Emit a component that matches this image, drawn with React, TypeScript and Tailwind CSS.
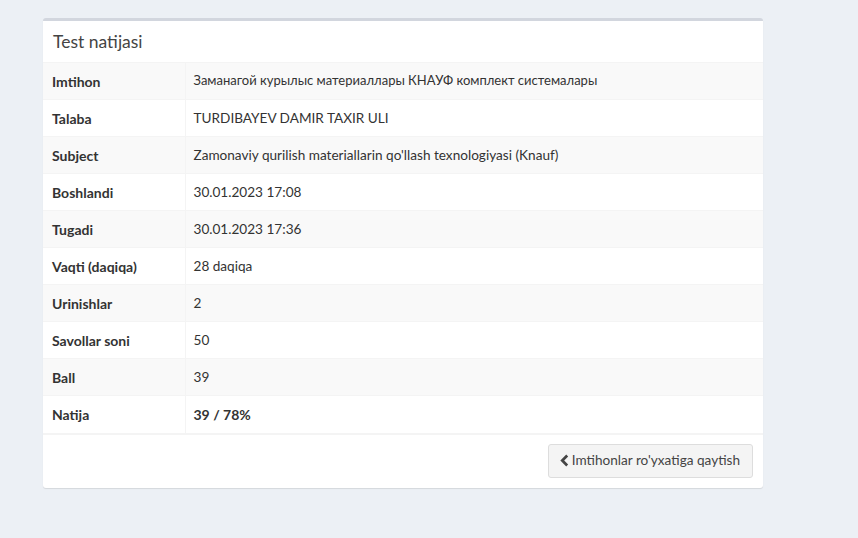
import React from 'react';

const rows: { label: string; value: string; bold?: boolean; cyr?: boolean }[] = [
  { label: 'Imtihon', value: 'Заманагой курылыс материаллары КНАУФ комплект системалары', cyr: true },
  { label: 'Talaba', value: 'TURDIBAYEV DAMIR TAXIR ULI' },
  { label: 'Subject', value: "Zamonaviy qurilish materiallarin qo'llash texnologiyasi (Knauf)" },
  { label: 'Boshlandi', value: '30.01.2023 17:08' },
  { label: 'Tugadi', value: '30.01.2023 17:36' },
  { label: 'Vaqti (daqiqa)', value: '28 daqiqa' },
  { label: 'Urinishlar', value: '2' },
  { label: 'Savollar soni', value: '50' },
  { label: 'Ball', value: '39' },
  { label: 'Natija', value: '39 / 78%', bold: true },
];

export default function App() {
  return (
    <div
      className="min-h-[538px] w-full bg-[#ecf0f5] pt-[18px] pl-[43px] text-[13.6px] text-[#333]"
      style={{ fontFamily: 'Lato, "Noto Sans", sans-serif' }}
    >
      {/* Box */}
      <div className="w-[720px] rounded-[3px] border-t-[3px] border-[#d2d6de] bg-white shadow-[0_1px_1px_rgba(0,0,0,0.1)]">
        {/* Header */}
        <div className="flex h-[41px] items-center px-[10px]">
          <h3 className="text-[17.5px] leading-none text-[#444]">Test natijasi</h3>
        </div>

        {/* Table */}
        <table className="w-full border-collapse">
          <tbody>
            {rows.map((r, i) => (
              <tr
                key={r.label}
                className={`h-[37px] border-t border-[#f4f4f4] ${i % 2 === 0 ? 'bg-[#f9f9f9]' : 'bg-white'}`}
              >
                <th className="w-[142px] border-r border-[#f4f4f4] px-[9px] text-left text-[14px] font-bold text-[#333]">
                  {r.label}
                </th>
                <td
                  className={`px-[8px] text-[#333] ${r.bold ? 'text-[14px] font-bold' : ''} ${r.cyr ? 'text-[13px]' : ''}`}
                >
                  {r.value}
                </td>
              </tr>
            ))}
          </tbody>
        </table>

        {/* Footer */}
        <div className="flex justify-end border-t-2 border-[#f4f4f4] px-[10px] pt-[9px] pb-[10px]">
          <button className="flex h-[34px] items-center gap-[3px] rounded-[3px] border border-[#ddd] bg-[#f4f4f4] pl-[11px] pr-[12px] text-[13.6px] text-[#444]">
            <svg viewBox="0 0 10 14" className="h-[13px] w-[9px]" fill="none" stroke="#444" strokeWidth="3">
              <path d="M8 1.5 L2.5 7 L8 12.5" />
            </svg>
            Imtihonlar ro'yxatiga qaytish
          </button>
        </div>
      </div>
    </div>
  );
}
